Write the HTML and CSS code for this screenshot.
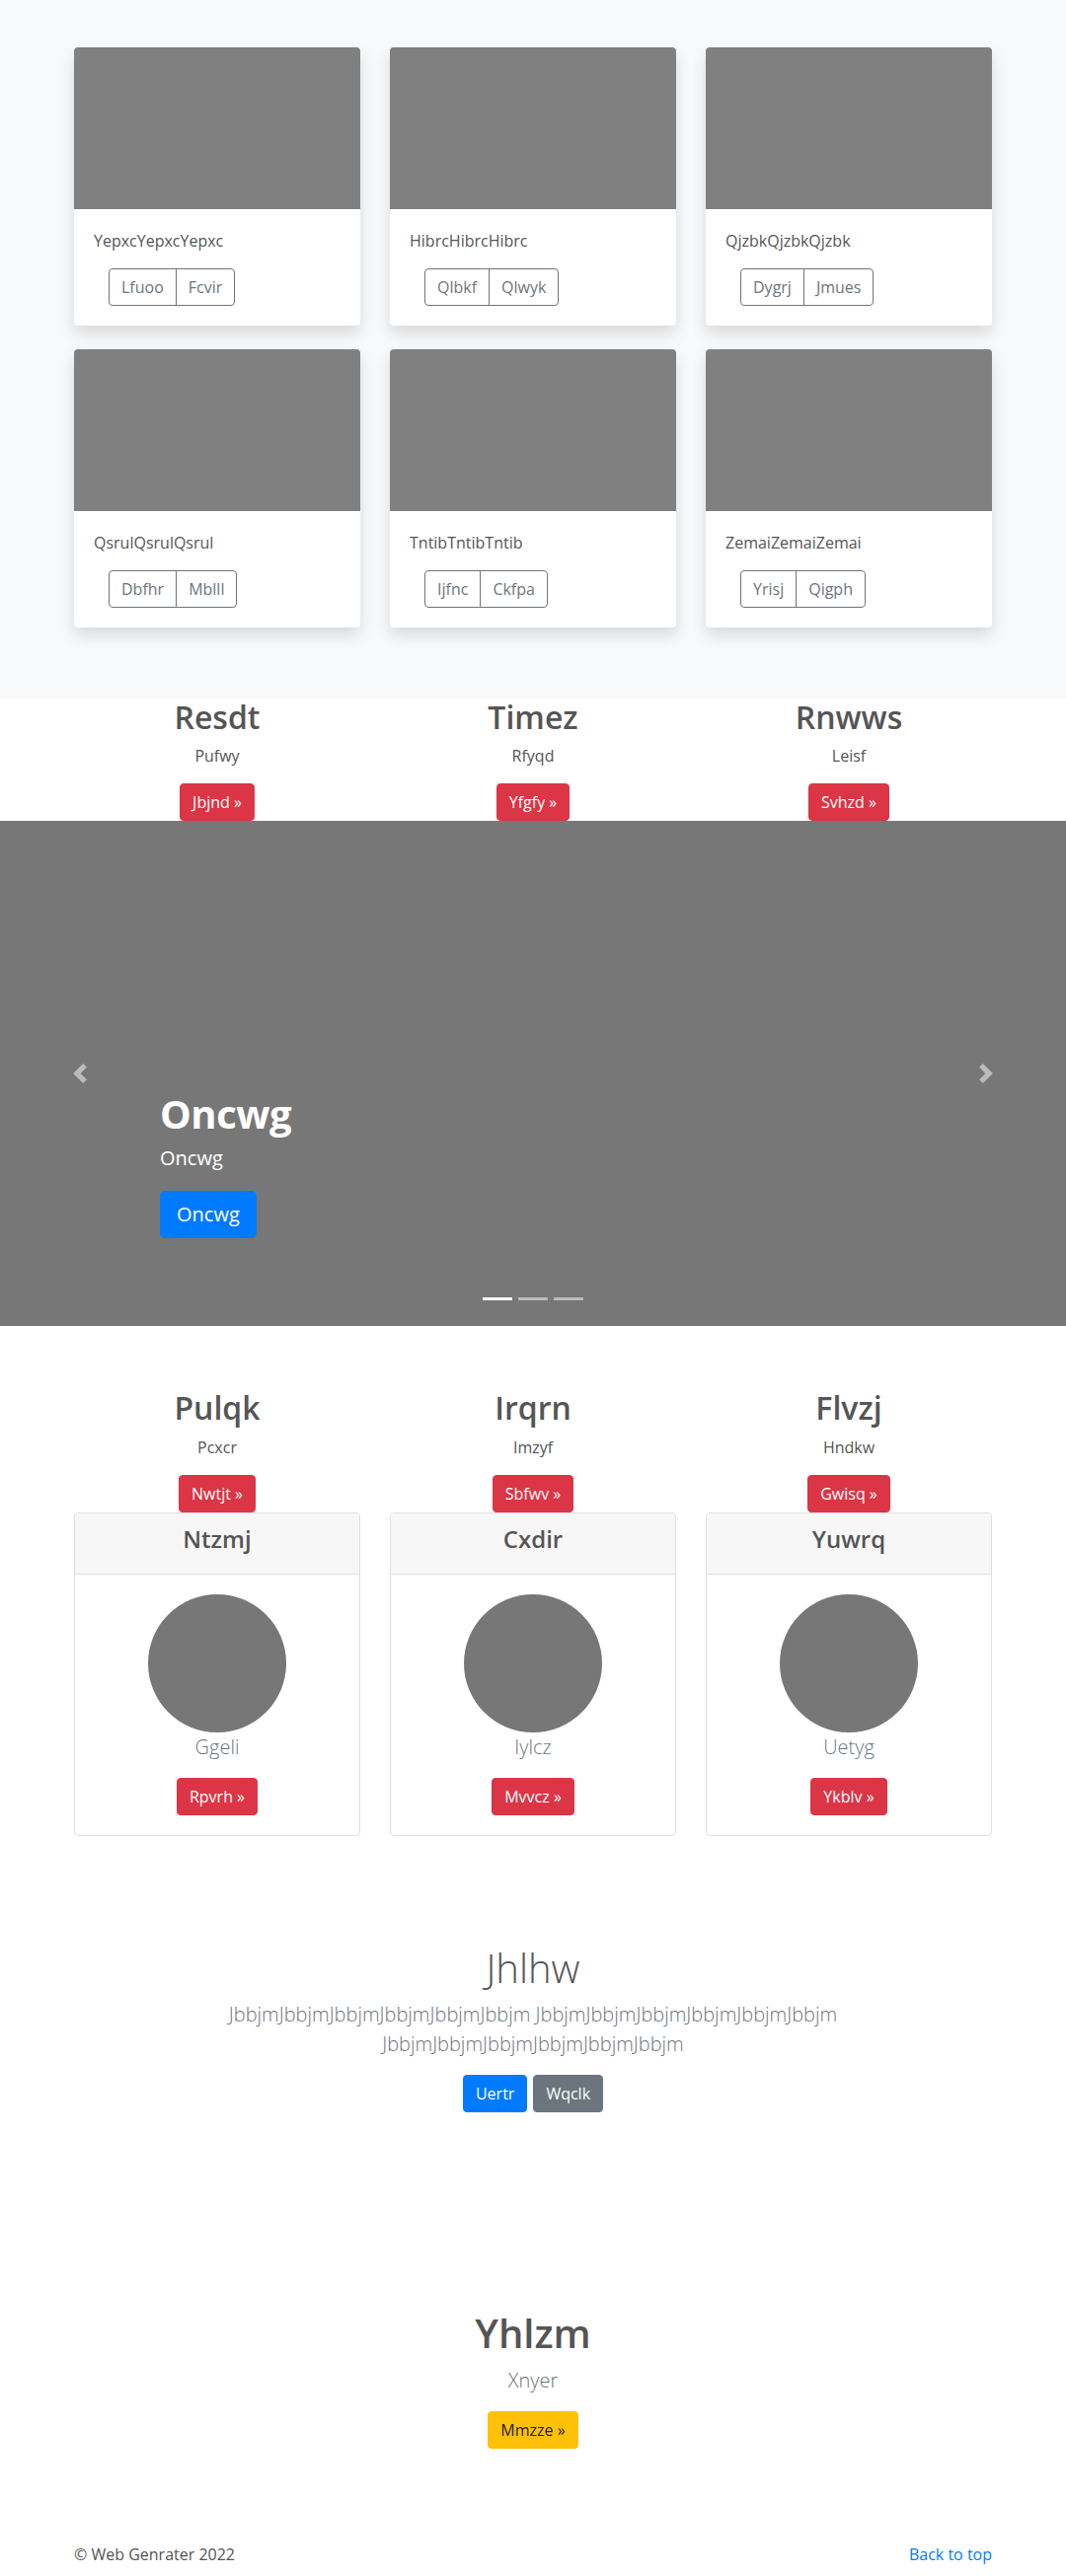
FILE: index.html
```html
<!DOCTYPE html>
<html lang="en">
<head>
<meta charset="utf-8">
<title>Page</title>
<link rel="stylesheet" href="styles.css">
</head>
<body>
<section class="album">
  <div class="container">
    <div class="grid3 album-grid">
      <div class="acard">
        <div class="acard-img"></div>
        <div class="acard-body">
          <p class="acard-text">YepxcYepxcYepxc</p>
          <div class="btn-group"><a class="btn btn-outline">Lfuoo</a><a class="btn btn-outline">Fcvir</a></div>
        </div>
      </div>
      <div class="acard">
        <div class="acard-img"></div>
        <div class="acard-body">
          <p class="acard-text">HibrcHibrcHibrc</p>
          <div class="btn-group"><a class="btn btn-outline">Qlbkf</a><a class="btn btn-outline">Qlwyk</a></div>
        </div>
      </div>
      <div class="acard">
        <div class="acard-img"></div>
        <div class="acard-body">
          <p class="acard-text">QjzbkQjzbkQjzbk</p>
          <div class="btn-group"><a class="btn btn-outline">Dygrj</a><a class="btn btn-outline">Jmues</a></div>
        </div>
      </div>
      <div class="acard">
        <div class="acard-img"></div>
        <div class="acard-body">
          <p class="acard-text">QsrulQsrulQsrul</p>
          <div class="btn-group"><a class="btn btn-outline">Dbfhr</a><a class="btn btn-outline">Mblll</a></div>
        </div>
      </div>
      <div class="acard">
        <div class="acard-img"></div>
        <div class="acard-body">
          <p class="acard-text">TntibTntibTntib</p>
          <div class="btn-group"><a class="btn btn-outline">Ijfnc</a><a class="btn btn-outline">Ckfpa</a></div>
        </div>
      </div>
      <div class="acard">
        <div class="acard-img"></div>
        <div class="acard-body">
          <p class="acard-text">ZemaiZemaiZemai</p>
          <div class="btn-group"><a class="btn btn-outline">Yrisj</a><a class="btn btn-outline">Qigph</a></div>
        </div>
      </div>
    </div>
  </div>
</section>

<section class="container grid3 marketing">
  <div class="mcol"><h2>Resdt</h2><p>Pufwy</p><a class="btn btn-danger">Jbjnd &raquo;</a></div>
  <div class="mcol"><h2>Timez</h2><p>Rfyqd</p><a class="btn btn-danger">Yfgfy &raquo;</a></div>
  <div class="mcol"><h2>Rnwws</h2><p>Leisf</p><a class="btn btn-danger">Svhzd &raquo;</a></div>
</section>

<section class="carousel">
  <a class="ctrl ctrl-prev"><svg viewBox="0 0 8 8" width="20" height="20"><path fill="#fff" d="M5.25 0l-4 4 4 4 1.5-1.5L4.25 4l2.5-2.5L5.25 0z"/></svg></a>
  <div class="caption">
    <h1>Oncwg</h1>
    <p>Oncwg</p>
    <a class="btn btn-lg btn-primary">Oncwg</a>
  </div>
  <a class="ctrl ctrl-next"><svg viewBox="0 0 8 8" width="20" height="20"><path fill="#fff" d="M2.75 0l-1.5 1.5L3.75 4l-2.5 2.5L2.75 8l4-4-4-4z"/></svg></a>
  <ol class="indicators"><li class="active"></li><li></li><li></li></ol>
</section>

<section class="container">
  <div class="grid3 marketing">
    <div class="mcol"><h2>Pulqk</h2><p>Pcxcr</p><a class="btn btn-danger">Nwtjt &raquo;</a></div>
    <div class="mcol"><h2>Irqrn</h2><p>Imzyf</p><a class="btn btn-danger">Sbfwv &raquo;</a></div>
    <div class="mcol"><h2>Flvzj</h2><p>Hndkw</p><a class="btn btn-danger">Gwisq &raquo;</a></div>
  </div>
  <div class="grid3 pricing">
    <div class="pcard">
      <div class="pcard-header"><h4>Ntzmj</h4></div>
      <div class="pcard-body"><div class="circle"></div><p class="ptext">Ggeli</p><a class="btn btn-danger">Rpvrh &raquo;</a></div>
    </div>
    <div class="pcard">
      <div class="pcard-header"><h4>Cxdir</h4></div>
      <div class="pcard-body"><div class="circle"></div><p class="ptext">Iylcz</p><a class="btn btn-danger">Mvvcz &raquo;</a></div>
    </div>
    <div class="pcard">
      <div class="pcard-header"><h4>Yuwrq</h4></div>
      <div class="pcard-body"><div class="circle"></div><p class="ptext">Uetyg</p><a class="btn btn-danger">Ykblv &raquo;</a></div>
    </div>
  </div>
</section>

<section class="jumbo">
  <h1 class="jumbo-heading">Jhlhw</h1>
  <p class="lead">JbbjmJbbjmJbbjmJbbjmJbbjmJbbjm JbbjmJbbjmJbbjmJbbjmJbbjmJbbjm JbbjmJbbjmJbbjmJbbjmJbbjmJbbjm</p>
  <div class="jumbo-btns"><a class="btn btn-primary">Uertr</a><a class="btn btn-secondary">Wqclk</a></div>
</section>

<section class="cta">
  <h1>Yhlzm</h1>
  <p class="lead">Xnyer</p>
  <a class="btn btn-warning">Mmzze &raquo;</a>
</section>

<footer class="container footer">
  <p>&copy; Web Genrater 2022</p>
  <a class="top-link" href="#">Back to top</a>
</footer>
</body>
</html>
```

FILE: styles.css
```css
* { box-sizing: border-box; }
html, body { margin: 0; padding: 0; }
body {
  font-family: "Open Sans", "Noto Sans", "Liberation Sans", sans-serif;
  font-size: 16px;
  line-height: 1.5;
  color: #555;
  background: #fff;
}
h1, h2, h4, p { margin: 0; }
a { text-decoration: none; }

.container {
  width: 960px;
  margin: 0 auto;
  padding: 0 15px;
}
.grid3 {
  display: grid;
  grid-template-columns: repeat(3, 1fr);
  column-gap: 30px;
}

/* buttons */
.btn {
  display: inline-block;
  font-size: 16px;
  line-height: 24px;
  padding: 6px 12px;
  border: 1px solid transparent;
  border-radius: 4px;
  color: #fff;
  white-space: nowrap;
}
.btn-lg { font-size: 20px; line-height: 30px; padding: 8px 16px; border-radius: 5px; }
.btn-danger { background: #dc3545; border-color: #dc3545; }
.btn-primary { background: #007bff; border-color: #007bff; }
.btn-secondary { background: #6c757d; border-color: #6c757d; }
.btn-warning { background: #ffc107; border-color: #ffc107; color: #212529; }
.btn-outline { color: #6c757d; border-color: #6c757d; background: transparent; }

/* album */
.album {
  background: #f8f9fa;
  padding: 48px 0 72px;
}
.album-grid { row-gap: 24px; }
.acard {
  background: #fff;
  border-radius: 4px;
  overflow: hidden;
  box-shadow: 0 8px 16px rgba(0, 0, 0, 0.13);
}
.acard-img { height: 164px; background: #808080; }
.acard-body { padding: 20px; }
.acard-text { margin-bottom: 16px; }
.btn-group { display: inline-flex; margin-left: 15px; }
.btn-group .btn:first-child { border-top-right-radius: 0; border-bottom-right-radius: 0; }
.btn-group .btn + .btn { margin-left: -1px; border-top-left-radius: 0; border-bottom-left-radius: 0; }

/* marketing */
.mcol {
  display: flex;
  flex-direction: column;
  align-items: center;
  text-align: center;
}
.mcol h2 { font-size: 32px; font-weight: 600; line-height: 1.2; margin-bottom: 8px; }
.mcol p { margin-bottom: 16px; }

/* carousel */
.carousel {
  position: relative;
  height: 512px;
  background: #777;
  margin-bottom: 64px;
  overflow: hidden;
}
.caption {
  position: absolute;
  left: 15%;
  right: 15%;
  bottom: 48px;
  padding: 20px 0;
  color: #fff;
  display: flex;
  flex-direction: column;
  align-items: flex-start;
}
.caption h1 { font-size: 40px; font-weight: 700; line-height: 48px; margin-bottom: 6px; letter-spacing: -0.5px; }
.caption p { font-size: 20px; line-height: 30px; margin-bottom: 18px; }
.caption .btn { margin-bottom: 21px; }
.ctrl {
  position: absolute;
  top: 0;
  bottom: 0;
  width: 15%;
  display: flex;
  align-items: center;
  justify-content: center;
  opacity: 0.5;
}
.ctrl-prev { left: 0; }
.ctrl-next { right: 0; }
.ctrl svg { display: block; }
.indicators {
  position: absolute;
  left: 0;
  right: 0;
  bottom: 0;
  margin: 0 0 16px;
  padding: 0;
  list-style: none;
  display: flex;
  justify-content: center;
}
.indicators li {
  width: 30px;
  height: 3px;
  margin: 10px 3px;
  background: rgba(255, 255, 255, 0.5);
}
.indicators li.active { background: #fff; }

/* pricing */
.pcard {
  border: 1px solid #dfdfdf;
  border-radius: 4px;
  overflow: hidden;
  text-align: center;
}
.pcard-header {
  background: #f7f7f7;
  border-bottom: 1px solid #dfdfdf;
  padding: 12px 20px;
}
.pcard-header h4 { font-size: 24px; font-weight: 600; line-height: 1.2; margin-bottom: 8px; }
.pcard-body {
  padding: 20px;
  display: flex;
  flex-direction: column;
  align-items: center;
}
.circle { width: 140px; height: 140px; border-radius: 50%; background: #777; }
.ptext { font-size: 20px; line-height: 30px; font-weight: 300; color: #6c757d; margin-bottom: 16px; }

/* jumbotron */
.jumbo {
  text-align: center;
  max-width: 700px;
  margin: 110px auto 0;
}
.jumbo-heading { font-size: 40px; line-height: 48px; font-weight: 300; margin-bottom: 8px; }
.lead { font-size: 20px; line-height: 30px; font-weight: 300; color: #6c757d; margin-bottom: 16px; }
.jumbo-btns { display: flex; justify-content: center; gap: 6px; margin-top: 11px; }

/* cta */
.cta {
  text-align: center;
  margin-top: 200px;
  display: flex;
  flex-direction: column;
  align-items: center;
}
.cta h1 { font-size: 40px; line-height: 48px; font-weight: 600; margin-bottom: 9px; }

/* footer */
.footer {
  display: flex;
  justify-content: space-between;
  margin-top: 95px;
}
.top-link { color: #007bff; }
```
